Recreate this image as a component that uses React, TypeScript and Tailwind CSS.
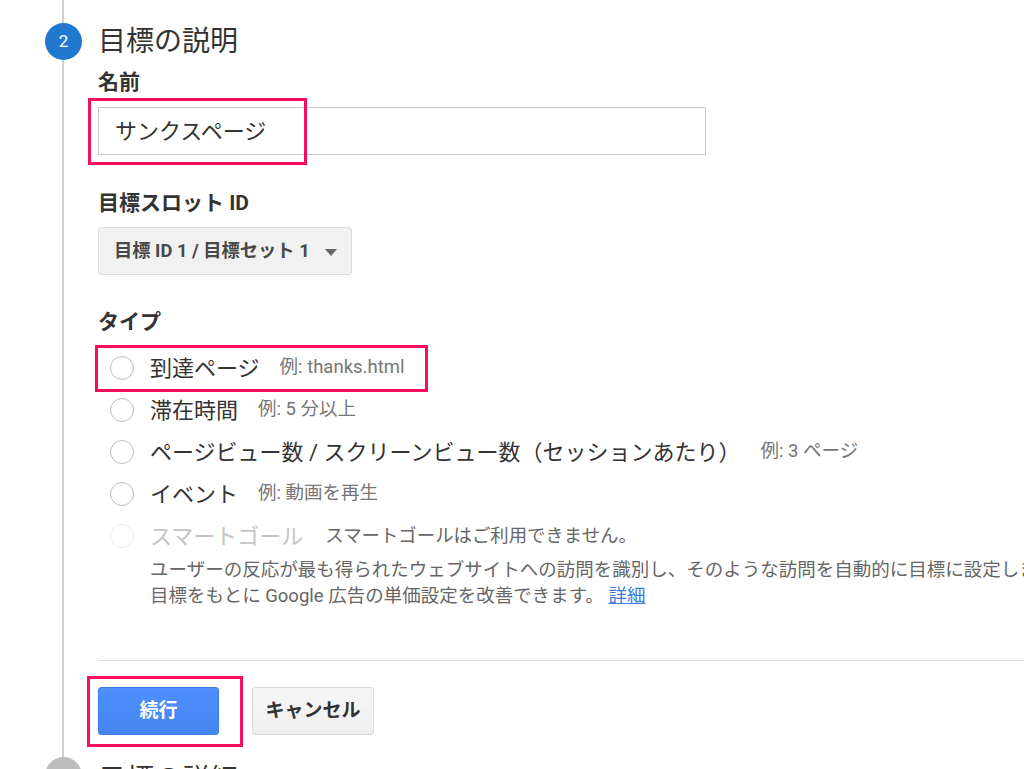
const font = "font-['Roboto','Noto_Sans_CJK_JP',sans-serif]";

type GoalType = {
  label: string;
  example?: string;
  disabled?: boolean;
  highlight?: boolean;
};

const goalTypes: GoalType[] = [
  { label: '到達ページ', example: '例: thanks.html', highlight: true },
  { label: '滞在時間', example: '例: 5 分以上' },
  { label: 'ページビュー数 / スクリーンビュー数（セッションあたり）', example: '例: 3 ページ' },
  { label: 'イベント', example: '例: 動画を再生' },
  { label: 'スマートゴール', disabled: true },
];

function PinkBox({ className }: { className: string }) {
  return <div className={`pointer-events-none absolute border-[3px] border-[#fb0d5c] ${className}`} />;
}

function RadioRow({ item }: { item: GoalType }) {
  return (
    <div className="relative flex h-[42px] items-center pl-[12px]">
      <span
        className={`h-[24px] w-[24px] shrink-0 rounded-full border-[1.5px] bg-white ${
          item.disabled ? 'border-[#ececec]' : 'border-[#bdbdbd]'
        }`}
      />
      <span
        className={`ml-[16px] whitespace-nowrap text-[22px] ${item.disabled ? 'text-[#c4c4c4]' : 'text-[#333]'}`}
      >
        {item.label}
      </span>
      {item.example && (
        <span className="ml-[20px] whitespace-nowrap text-[18.5px] text-[#757575]">{item.example}</span>
      )}
      {item.disabled && (
        <span className="ml-[22px] whitespace-nowrap text-[18.4px] text-[#666]">
          スマートゴールはご利用できません。
        </span>
      )}
      {item.highlight && <PinkBox className="left-[-3px] top-[-2px] h-[47px] w-[333px]" />}
    </div>
  );
}

export default function App() {
  return (
    <div className={`relative h-[769px] w-full overflow-hidden bg-white ${font}`}>
      <div className="absolute bottom-0 left-[62px] top-0 w-[2px] bg-[#cfcfcf]" />

      <div className="relative mt-[23px] flex items-center pl-[45px]">
        <div className="flex h-[37px] w-[37px] items-center justify-center rounded-full bg-[#2079cf] text-[17px] text-white">
          2
        </div>
        <h2 className="ml-[16px] text-[28px] leading-[37px] text-[#333]">目標の説明</h2>
      </div>

      <div className="relative pl-[98px]">
        <div className="mt-[8px] text-[21px] font-bold leading-[28px] text-[#333]">名前</div>
        <div className="relative mt-[11px] w-[608px]">
          <div className="flex h-[48px] items-center border border-[#c9c9c9] pl-[16px] text-[22px] text-[#333]">
            サンクスページ
          </div>
          <PinkBox className="left-[-10px] top-[-9px] h-[67px] w-[219px]" />
        </div>

        <div className="mt-[34px] text-[21px] font-bold leading-[28px] text-[#333]">目標スロット ID</div>
        <div className="mt-[10px] flex h-[48px] w-[254px] items-center justify-between rounded-[3px] border border-[#dcdcdc] bg-[#f1f1f1] pl-[15px] pr-[14px]">
          <span className="whitespace-nowrap text-[18.3px] font-bold text-[#484848]">目標 ID 1 / 目標セット 1</span>
          <svg width="12" height="7" viewBox="0 0 12 7" className="mt-[2px]">
            <path d="M0 0h12L6 7z" fill="#666" />
          </svg>
        </div>

        <div className="mt-[33px] text-[21px] font-bold leading-[28px] text-[#333]">タイプ</div>
        <div className="mt-[11px] flex flex-col">
          {goalTypes.map((item) => (
            <RadioRow key={item.label} item={item} />
          ))}
        </div>
        <div className="whitespace-nowrap pl-[52px] text-[18.5px] leading-[26px] text-[#666]">
          <p>ユーザーの反応が最も得られたウェブサイトへの訪問を識別し、そのような訪問を自動的に目標に設定します。この</p>
          <p>
            目標をもとに Google 広告の単価設定を改善できます。{' '}
            <a href="#" className="text-[#3b7ddd] underline">
              詳細
            </a>
          </p>
        </div>

        <div className="mt-[51px] border-t border-[#dedede]" />

        <div className="mt-[26px] flex gap-[33px]">
          <div className="relative">
            <button className="h-[48px] w-[121px] rounded-[3px] border border-[#3b7ce6] bg-gradient-to-b from-[#4d90fe] to-[#4485ee] text-[19px] font-bold text-white">
              続行
            </button>
            <PinkBox className="left-[-11px] top-[-11px] h-[71px] w-[156px]" />
          </div>
          <button className="h-[48px] w-[122px] rounded-[3px] border border-[#d9d9d9] bg-gradient-to-b from-[#f6f6f6] to-[#efefef] text-[19px] font-bold text-[#333]">
            キャンセル
          </button>
        </div>
      </div>

      <div className="relative mt-[22px] flex items-start pl-[45px]">
        <div className="h-[37px] w-[37px] rounded-full bg-[#bdbdbd]" />
        <h2 className="ml-[16px] mt-[4px] text-[28px] leading-[37px] text-[#333]">目標の詳細</h2>
      </div>
    </div>
  );
}
